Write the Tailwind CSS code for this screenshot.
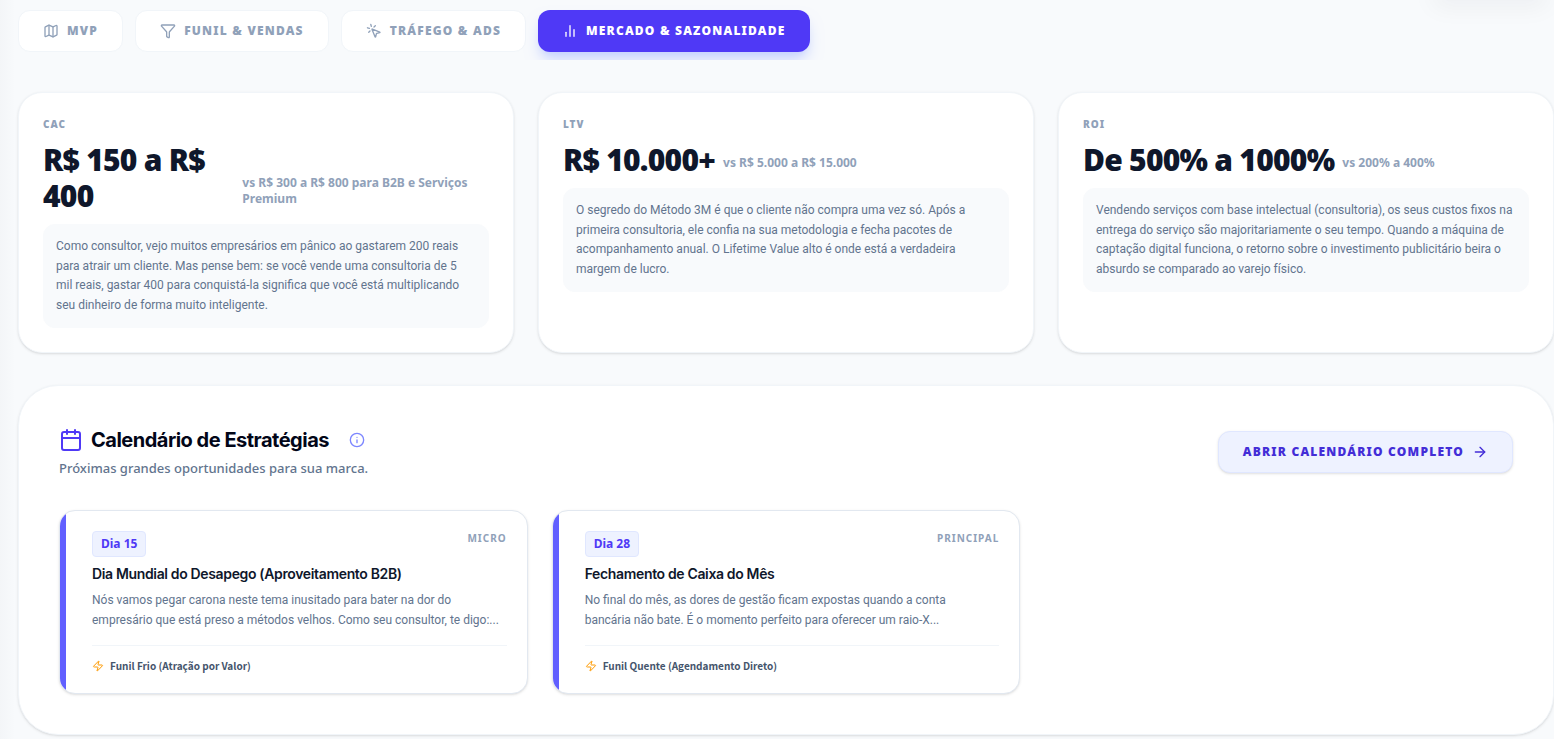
<!DOCTYPE html>
<html lang="pt-BR">
<head>
  <meta charset="UTF-8" />
  <meta name="viewport" content="width=device-width, initial-scale=1" />
  <title>Mercado & Sazonalidade</title>
  <script src="https://cdn.jsdelivr.net/npm/@tailwindcss/browser@4"></script>
</head>
<body class="relative min-h-screen overflow-x-hidden bg-slate-50 font-['Noto_Sans',sans-serif] text-slate-900">

  <!-- shadow of the header pill and of the sidebar -->
  <div class="pointer-events-none absolute -top-10 right-0 h-8 w-32 rounded-2xl shadow-xl shadow-slate-900/5"></div>
  <div class="pointer-events-none absolute inset-y-0 left-0 w-4 bg-linear-to-r from-slate-900/2 to-transparent"></div>

  <main class="relative pl-[18px]">

    <!-- Tabs -->
    <nav class="flex gap-3 overflow-hidden pt-[10px] pb-2">
      <button class="flex items-center gap-2 rounded-xl border border-slate-100 bg-white px-6 py-3 text-xs font-black uppercase tracking-widest text-slate-400">
        <svg class="size-4" viewBox="0 0 24 24" fill="none" stroke="currentColor" stroke-width="2" stroke-linecap="round" stroke-linejoin="round"><path d="M14.106 5.553a2 2 0 0 0 1.788 0l3.659-1.83A1 1 0 0 1 21 4.619v12.764a1 1 0 0 1-.553.894l-4.553 2.277a2 2 0 0 1-1.788 0l-4.212-2.106a2 2 0 0 0-1.788 0l-3.659 1.83A1 1 0 0 1 3 19.381V6.618a1 1 0 0 1 .553-.894l4.553-2.277a2 2 0 0 1 1.788 0z"/><path d="M15 5.764v15"/><path d="M9 3.236v15"/></svg>
        MVP
      </button>
      <button class="flex items-center gap-2 rounded-xl border border-slate-100 bg-white px-6 py-3 text-xs font-black uppercase tracking-widest text-slate-400">
        <svg class="size-4" viewBox="0 0 24 24" fill="none" stroke="currentColor" stroke-width="2" stroke-linecap="round" stroke-linejoin="round"><path d="M10 20a1 1 0 0 0 .553.895l2 1A1 1 0 0 0 14 21v-7a2 2 0 0 1 .517-1.341L21.74 4.67A1 1 0 0 0 21 3H3a1 1 0 0 0-.742 1.67l7.225 7.989A2 2 0 0 1 10 14z"/></svg>
        Funil &amp; Vendas
      </button>
      <button class="flex items-center gap-2 rounded-xl border border-slate-100 bg-white px-6 py-3 text-xs font-black uppercase tracking-widest text-slate-400">
        <svg class="size-4" viewBox="0 0 24 24" fill="none" stroke="currentColor" stroke-width="2" stroke-linecap="round" stroke-linejoin="round"><path d="M14 4.1 12 6"/><path d="m5.1 8-2.9-.8"/><path d="m6 12-1.9 2"/><path d="M7.2 2.2 8 5.1"/><path d="M9.037 9.69a.498.498 0 0 1 .653-.653l11 4.5a.5.5 0 0 1-.074.949l-4.349 1.041a1 1 0 0 0-.74.739l-1.04 4.35a.5.5 0 0 1-.95.074z"/></svg>
        Tráfego &amp; Ads
      </button>
      <button class="flex items-center gap-2 rounded-xl bg-indigo-600 px-6 py-3 text-xs font-black uppercase tracking-widest text-white shadow-lg shadow-indigo-200">
        <svg class="size-4" viewBox="0 0 24 24" fill="none" stroke="currentColor" stroke-width="2" stroke-linecap="round" stroke-linejoin="round"><path d="M18 20V10"/><path d="M12 20V4"/><path d="M6 20v-6"/></svg>
        Mercado &amp; Sazonalidade
      </button>
    </nav>

    <!-- Metrics -->
    <section class="mt-8 grid grid-cols-3 gap-6">
      <article class="rounded-3xl border border-slate-100 bg-white p-6 shadow-sm">
        <h3 class="text-[10px] leading-[15px] font-black uppercase tracking-widest text-slate-400">CAC</h3>
        <div class="mt-[10px] flex items-end gap-2">
          <span class="text-3xl font-black tracking-tight">R$ 150 a R$ 400</span>
          <span class="mb-[7px] text-xs font-bold text-slate-400">vs R$ 300 a R$ 800 para B2B e Serviços Premium</span>
        </div>
        <p class="mt-[10px] rounded-xl border border-slate-50 bg-slate-50 p-3 font-['Roboto',sans-serif] text-xs leading-relaxed font-normal text-slate-500">Como consultor, vejo muitos empresários em pânico ao gastarem 200 reais<br> para atrair um cliente. Mas pense bem: se você vende uma consultoria de 5<br> mil reais, gastar 400 para conquistá-la significa que você está multiplicando<br> seu dinheiro de forma muito inteligente.</p>
      </article>
      <article class="rounded-3xl border border-slate-100 bg-white p-6 shadow-sm">
        <h3 class="text-[10px] leading-[15px] font-black uppercase tracking-widest text-slate-400">LTV</h3>
        <div class="mt-[10px] flex items-end gap-2">
          <span class="text-3xl font-black tracking-tight">R$ 10.000+</span>
          <span class="mb-[7px] text-xs font-bold text-slate-400">vs R$ 5.000 a R$ 15.000</span>
        </div>
        <p class="mt-[10px] rounded-xl border border-slate-50 bg-slate-50 p-3 font-['Roboto',sans-serif] text-xs leading-relaxed font-normal text-slate-500">O segredo do Método 3M é que o cliente não compra uma vez só. Após a<br> primeira consultoria, ele confia na sua metodologia e fecha pacotes de<br> acompanhamento anual. O Lifetime Value alto é onde está a verdadeira<br> margem de lucro.</p>
      </article>
      <article class="rounded-3xl border border-slate-100 bg-white p-6 shadow-sm">
        <h3 class="text-[10px] leading-[15px] font-black uppercase tracking-widest text-slate-400">ROI</h3>
        <div class="mt-[10px] flex items-end gap-2">
          <span class="text-3xl font-black tracking-tight">De 500% a 1000%</span>
          <span class="mb-[7px] text-xs font-bold text-slate-400">vs 200% a 400%</span>
        </div>
        <p class="mt-[10px] rounded-xl border border-slate-50 bg-slate-50 p-3 font-['Roboto',sans-serif] text-xs leading-relaxed font-normal text-slate-500">Vendendo serviços com base intelectual (consultoria), os seus custos fixos na<br> entrega do serviço são majoritariamente o seu tempo. Quando a máquina de<br> captação digital funciona, o retorno sobre o investimento publicitário beira o<br> absurdo se comparado ao varejo físico.</p>
      </article>
    </section>

    <!-- Strategy calendar -->
    <section class="mt-8 rounded-[40px] border border-slate-100 bg-white p-10 shadow-sm">
      <header class="mb-8 flex items-center justify-between">
        <div>
          <div class="flex items-center">
            <svg class="mr-2 size-6 text-indigo-600" viewBox="0 0 24 24" fill="none" stroke="currentColor" stroke-width="2" stroke-linecap="round" stroke-linejoin="round"><path d="M8 2v4"/><path d="M16 2v4"/><rect width="18" height="18" x="3" y="4" rx="2"/><path d="M3 10h18"/></svg>
            <h2 class="font-['Inter',sans-serif] text-xl font-bold tracking-tight text-slate-950">Calendário de Estratégias</h2>
            <button class="ml-5 text-indigo-400" aria-label="Informações">
              <svg class="size-4" viewBox="0 0 24 24" fill="none" stroke="currentColor" stroke-width="2" stroke-linecap="round" stroke-linejoin="round"><circle cx="12" cy="12" r="10"/><path d="M12 16v-4"/><path d="M12 8h.01"/></svg>
            </button>
          </div>
          <p class="mt-1 text-[13px] leading-5 font-medium text-slate-500">Próximas grandes oportunidades para sua marca.</p>
        </div>
        <button class="flex items-center gap-2 rounded-xl border border-indigo-100 bg-indigo-50 px-6 py-3 text-xs font-black uppercase tracking-widest text-indigo-700 shadow-sm">
          Abrir calendário completo
          <svg class="size-4" viewBox="0 0 24 24" fill="none" stroke="currentColor" stroke-width="2" stroke-linecap="round" stroke-linejoin="round"><path d="M5 12h14"/><path d="m12 5 7 7-7 7"/></svg>
        </button>
      </header>

      <div class="grid grid-cols-3 gap-6">
        <article class="relative overflow-hidden rounded-2xl border border-slate-200 bg-white p-5 pl-8 shadow-sm">
          <div class="absolute inset-y-0 left-0 w-1.5 bg-indigo-500"></div>
          <div class="mb-[7px] flex items-start justify-between">
            <span class="rounded border border-indigo-100 bg-indigo-50 px-2 py-1 text-xs font-bold text-indigo-600">Dia 15</span>
            <span class="text-[10px] leading-[15px] font-bold uppercase tracking-widest text-slate-400">Micro</span>
          </div>
          <h4 class="font-['Inter',sans-serif] text-sm font-semibold tracking-tight">Dia Mundial do Desapego (Aproveitamento B2B)</h4>
          <p class="mt-1.5 font-['Roboto',sans-serif] text-xs leading-5 text-slate-500">Nós vamos pegar carona neste tema inusitado para bater na dor do<br> empresário que está preso a métodos velhos. Como seu consultor, te digo:...</p>
          <div class="mt-[15px] flex items-center gap-1.5 border-t border-slate-100 pt-3 font-['Noto_Sans_CJK_JP',sans-serif] text-[10px] leading-[15px] font-bold text-slate-600">
            <svg class="size-3 text-amber-500" viewBox="0 0 24 24" fill="none" stroke="currentColor" stroke-width="2" stroke-linecap="round" stroke-linejoin="round"><path d="M4 14a1 1 0 0 1-.78-1.63l9.9-10.2a.5.5 0 0 1 .86.46l-1.92 6.02A1 1 0 0 0 13 10h7a1 1 0 0 1 .78 1.63l-9.9 10.2a.5.5 0 0 1-.86-.46l1.92-6.02A1 1 0 0 0 11 14z"/></svg>
            Funil Frio (Atração por Valor)
          </div>
        </article>
        <article class="relative overflow-hidden rounded-2xl border border-slate-200 bg-white p-5 pl-8 shadow-sm">
          <div class="absolute inset-y-0 left-0 w-1.5 bg-indigo-500"></div>
          <div class="mb-[7px] flex items-start justify-between">
            <span class="rounded border border-indigo-100 bg-indigo-50 px-2 py-1 text-xs font-bold text-indigo-600">Dia 28</span>
            <span class="text-[10px] leading-[15px] font-bold uppercase tracking-widest text-slate-400">Principal</span>
          </div>
          <h4 class="font-['Inter',sans-serif] text-sm font-semibold tracking-tight">Fechamento de Caixa do Mês</h4>
          <p class="mt-1.5 font-['Roboto',sans-serif] text-xs leading-5 text-slate-500">No final do mês, as dores de gestão ficam expostas quando a conta<br> bancária não bate. É o momento perfeito para oferecer um raio-X...</p>
          <div class="mt-[15px] flex items-center gap-1.5 border-t border-slate-100 pt-3 font-['Noto_Sans_CJK_JP',sans-serif] text-[10px] leading-[15px] font-bold text-slate-600">
            <svg class="size-3 text-amber-500" viewBox="0 0 24 24" fill="none" stroke="currentColor" stroke-width="2" stroke-linecap="round" stroke-linejoin="round"><path d="M4 14a1 1 0 0 1-.78-1.63l9.9-10.2a.5.5 0 0 1 .86.46l-1.92 6.02A1 1 0 0 0 13 10h7a1 1 0 0 1 .78 1.63l-9.9 10.2a.5.5 0 0 1-.86-.46l1.92-6.02A1 1 0 0 0 11 14z"/></svg>
            Funil Quente (Agendamento Direto)
          </div>
        </article>
      </div>
    </section>

  </main>

</body>
</html>
